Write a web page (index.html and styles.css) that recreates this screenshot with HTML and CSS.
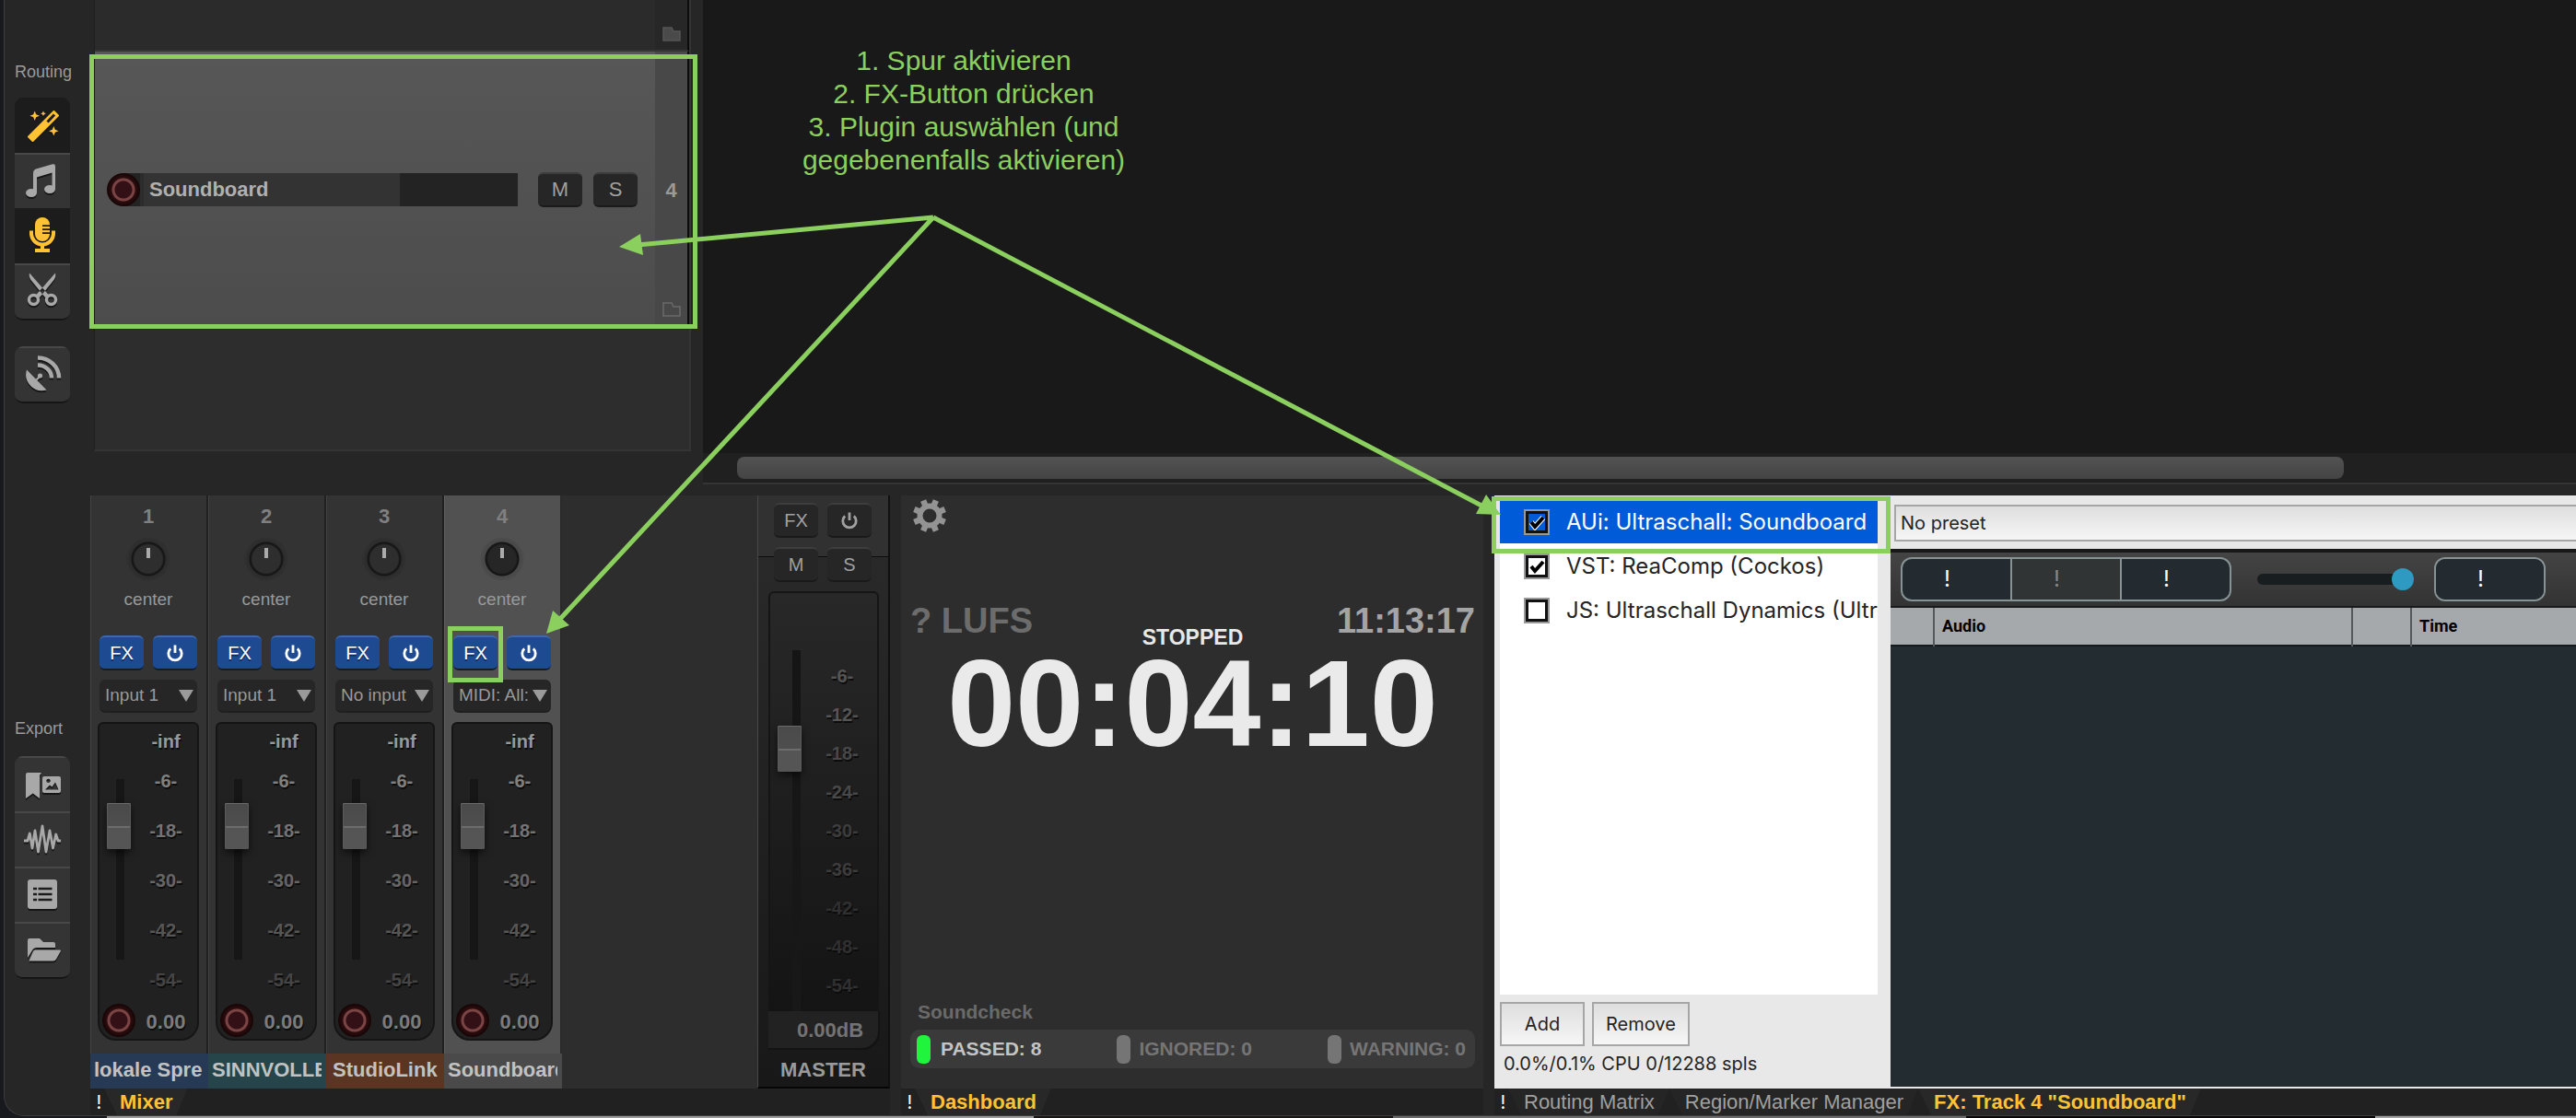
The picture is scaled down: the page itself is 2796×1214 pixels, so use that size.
FILE: index.html
```html
<!DOCTYPE html>
<html lang="de">
<head>
<meta charset="utf-8">
<title>Ultraschall</title>
<link rel="stylesheet" href="styles.css">
</head>
<body>
<svg class="defs" aria-hidden="true">
  <symbol id="power" viewBox="0 0 20 20"><path d="M5.2 5.4A7.2 7.2 0 1 0 14.8 5.4M10 1.5V10" fill="none" stroke="currentColor" stroke-width="2.8"/></symbol>
  <symbol id="folder" viewBox="0 0 20 16"><path d="M1 1H10L12 5H19V15H1Z" stroke-width="1.5"/></symbol>
</svg>
<div class="window">
  <nav class="sidebar">
    <h2 class="side-title">Routing</h2>
    <div class="tool-group">
      <button class="tool on" aria-label="Magic routing"><svg viewBox="0 0 60 60"><path fill-rule="evenodd" stroke="currentColor" stroke-width="2" stroke-linejoin="round" d="M42.5 15L47 19.5L19.5 47L15 42.5Z"/><path d="M35.5 26.5L43 18.5" stroke="#1c1c1c" stroke-width="3"/><path d="M21.700 14.500l1.500 3.700 3.700 1.500-3.700 1.500-1.500 3.700-1.500-3.700-3.700-1.500 3.700-1.500zM31 14.500l.9 1.900 1.900.9-1.900.9-.9 1.900-.9-1.900-1.900-.9 1.900-.9zM42.300 31l1.500 3.700 3.700 1.500-3.700 1.500-1.500 3.700-1.500-3.700-3.700-1.500 3.700-1.500z"/></svg></button>
      <button class="tool" aria-label="Music"><svg viewBox="0 0 60 60"><path d="M20 43V22Q20 18.500 23 17.500L41 12.300Q44 11.500 44 14.500V39H40.500V21.500L24 26.500V43Z"/><ellipse cx="18" cy="43.500" rx="6" ry="4.600"/><ellipse cx="38" cy="39.500" rx="6" ry="4.600"/></svg></button>
      <button class="tool on" aria-label="Recording"><svg viewBox="0 0 60 60"><rect x="22" y="10" width="16" height="26" rx="8"/><path d="M30 19.200h8M30 23.200h8M30 27.200h8" stroke="#1c1c1c" stroke-width="1.800"/><path d="M18 24.500V27.500a12 12 0 0 0 24 0V24.500" fill="none" stroke="currentColor" stroke-width="4"/><path d="M28 38h4v6h6v4H22v-4h6z"/></svg></button>
      <button class="tool" aria-label="Editing"><svg viewBox="0 0 60 60"><path d="M16 10.500L37 34.500L33 37L17.500 18Q15 14 16 10.500ZM44 10.500L23 34.500L27 37L42.500 18Q45 14 44 10.500Z"/><circle cx="20.500" cy="39.500" r="5" fill="none" stroke="currentColor" stroke-width="3.400"/><circle cx="39.500" cy="39.500" r="5" fill="none" stroke="currentColor" stroke-width="3.400"/></svg></button>
    </div>
    <div class="tool-group single">
      <button class="tool" aria-label="Streaming"><svg viewBox="0 0 60 60"><path d="M13 25.500L34.500 47.500A17.500 17.500 0 0 1 13 25.500Z"/><circle cx="27.500" cy="32" r="2.600"/><path d="M23 37L28 32" stroke="currentColor" stroke-width="2"/><path d="M25 12.500A23 22 0 0 1 48 34.500M25 20.500A15 14 0 0 1 40 34.500" fill="none" stroke="currentColor" stroke-width="4.500"/></svg></button>
    </div>
    <h2 class="side-title export">Export</h2>
    <div class="tool-group">
      <button class="tool" aria-label="Chapter images"><svg viewBox="0 0 60 60"><path d="M12 20Q12 18 14 18H29L27 21V46L19.700 40.500L12 46Z"/><path fill-rule="evenodd" d="M32 22H48Q50 22 50 24V38Q50 40 48 40H32Q30 40 30 38V24Q30 22 32 22ZM36.500 24.700A2.200 2.200 0 1 0 36.501 24.700ZM33 36.500H47.500L44 28.500L40.500 33.500L38 31.500Z"/></svg></button>
      <button class="tool" aria-label="Audio"><svg viewBox="0 0 60 60"><path d="M10 32H14L16.300 24L19 40L22 21L25.500 44L30 16L34 44L38 21L41.500 40L44.700 25L47 32H50" fill="none" stroke="currentColor" stroke-width="2.800" stroke-linejoin="round"/></svg></button>
      <button class="tool" aria-label="Metadata"><svg viewBox="0 0 60 60"><rect x="14" y="14" width="32" height="32" rx="3"/><path d="M20 24h4M20 30h4M20 36h4M25.500 24h15M25.500 30h15M25.500 36h15" stroke="#1c1c1c" stroke-width="2.600"/></svg></button>
      <button class="tool" aria-label="Project folder"><svg viewBox="0 0 60 60"><path d="M14 20Q14 18 16 18H27L31 22H42Q44 22 44 24V28H24Q20.500 28 19 31L14 39Z"/><path d="M22 30.500H49Q50.500 30.500 49.800 32L45 40.500Q44 42.500 41.500 42.500H15.500L20 32Q20.700 30.500 22 30.500Z"/></svg></button>
    </div>
  </nav>

  <main class="content">
    <section class="top">
      <div class="tracks">
        <div class="track prev"><div class="track-body"></div><div class="track-num"><svg class="folder filled"><use href="#folder"/></svg></div></div>
        <div class="track selected">
          <div class="track-body">
            <div class="name-bar"><button class="rec" aria-label="Record arm"></button><input class="track-name" value="Soundboard" aria-label="Track name"><span class="meter"></span></div>
            <button class="btn">M</button><button class="btn">S</button>
          </div>
          <div class="track-num"><span>4</span><svg class="folder"><use href="#folder"/></svg></div>
          <span class="mark mark-track"></span>
        </div>
      </div>
      <div class="arrange">
        <div class="canvas"><div class="note"><p>1. Spur aktivieren</p><p>2. FX-Button drücken</p><p>3. Plugin auswählen (und gegebenenfalls aktivieren)</p></div></div>
        <div class="scroll"><div class="scroll-thumb"></div></div>
      </div>
    </section>

    <section class="docks">
      <div class="dock">
        <div class="mixer">
          <article class="strip">
            <span class="num">1</span><span class="knob"></span><span class="pan">center</span>
            <div class="pair"><button class="btn blue">FX</button><button class="btn blue" aria-label="Bypass"><svg><use href="#power"/></svg></button></div>
            <select class="input-sel" aria-label="Input"><option>Input 1</option></select>
            <div class="fader"><div class="fader-l"><input type="range" value="82" aria-label="Volume"><button class="rec" aria-label="Record arm"></button></div>
              <ul class="scale"><li>-inf</li><li>-6-</li><li>-18-</li><li>-30-</li><li>-42-</li><li>-54-</li><li>0.00</li></ul></div>
            <span class="name c1">lokale Spre</span>
          </article>
          <article class="strip">
            <span class="num">2</span><span class="knob"></span><span class="pan">center</span>
            <div class="pair"><button class="btn blue">FX</button><button class="btn blue" aria-label="Bypass"><svg><use href="#power"/></svg></button></div>
            <select class="input-sel" aria-label="Input"><option>Input 1</option></select>
            <div class="fader"><div class="fader-l"><input type="range" value="82" aria-label="Volume"><button class="rec" aria-label="Record arm"></button></div>
              <ul class="scale"><li>-inf</li><li>-6-</li><li>-18-</li><li>-30-</li><li>-42-</li><li>-54-</li><li>0.00</li></ul></div>
            <span class="name c2">SINNVOLLE</span>
          </article>
          <article class="strip">
            <span class="num">3</span><span class="knob"></span><span class="pan">center</span>
            <div class="pair"><button class="btn blue">FX</button><button class="btn blue" aria-label="Bypass"><svg><use href="#power"/></svg></button></div>
            <select class="input-sel" aria-label="Input"><option>No input</option></select>
            <div class="fader"><div class="fader-l"><input type="range" value="82" aria-label="Volume"><button class="rec" aria-label="Record arm"></button></div>
              <ul class="scale"><li>-inf</li><li>-6-</li><li>-18-</li><li>-30-</li><li>-42-</li><li>-54-</li><li>0.00</li></ul></div>
            <span class="name c3">StudioLink</span>
          </article>
          <article class="strip active">
            <span class="num">4</span><span class="knob"></span><span class="pan">center</span>
            <div class="pair"><button class="btn blue">FX</button><button class="btn blue" aria-label="Bypass"><svg><use href="#power"/></svg></button><span class="mark mark-fx"></span></div>
            <select class="input-sel" aria-label="Input"><option>MIDI: All:</option></select>
            <div class="fader"><div class="fader-l"><input type="range" value="82" aria-label="Volume"><button class="rec" aria-label="Record arm"></button></div>
              <ul class="scale"><li>-inf</li><li>-6-</li><li>-18-</li><li>-30-</li><li>-42-</li><li>-54-</li><li>0.00</li></ul></div>
            <span class="name c4">Soundboard</span>
          </article>
          <article class="master">
            <div class="master-top"><div class="pair"><button class="btn">FX</button><button class="btn" aria-label="Bypass"><svg><use href="#power"/></svg></button></div></div>
            <div class="pair second"><button class="btn">M</button><button class="btn">S</button></div>
            <div class="fader"><div class="fader-l"><input type="range" value="76" aria-label="Master volume"></div>
              <ul class="scale"><li>-6-</li><li>-12-</li><li>-18-</li><li>-24-</li><li>-30-</li><li>-36-</li><li>-42-</li><li>-48-</li><li>-54-</li></ul></div>
            <span class="db">0.00dB</span>
            <span class="master-name">MASTER</span>
          </article>
        </div>
        <div class="tabs"><button class="bang">!</button><button class="tab current">Mixer</button></div>
      </div>

      <div class="dock">
        <div class="dashboard">
          <button class="gear" aria-label="Settings"><svg viewBox="-18 -18 36 36"><circle r="10.500" fill="none" stroke="currentColor" stroke-width="6"/><g stroke="currentColor" stroke-width="6.500"><path d="M4.600-11L6.900-16.600M11-4.600L16.600-6.900M11 4.600L16.600 6.900M4.600 11L6.900 16.600M-4.600 11L-6.900 16.600M-11 4.600L-16.600 6.900M-11-4.600L-16.600-6.900M-4.600-11L-6.900-16.600"/></g></svg></button>
          <div class="clock-row"><span class="lufs">? LUFS</span><span class="time">11:13:17</span></div>
          <span class="state">STOPPED</span>
          <span class="pos">00:04:10</span>
          <h3 class="check-title">Soundcheck</h3>
          <div class="checks"><span class="check ok"><i></i>PASSED: 8</span><span class="check"><i></i>IGNORED: 0</span><span class="check"><i></i>WARNING: 0</span></div>
        </div>
        <div class="tabs"><button class="bang">!</button><button class="tab current">Dashboard</button></div>
      </div>

      <div class="dock">
        <div class="fx">
          <div class="fx-left">
            <div class="fx-list">
              <label class="fx-item sel"><input type="checkbox" checked><span>AUi: Ultraschall: Soundboard</span></label>
              <label class="fx-item"><input type="checkbox" checked><span>VST: ReaComp (Cockos)</span></label>
              <label class="fx-item"><input type="checkbox"><span>JS: Ultraschall Dynamics (Ultr</span></label>
            </div>
            <div class="fx-actions"><button>Add</button><button>Remove</button></div>
            <p class="cpu">0.0%/0.1% CPU 0/12288 spls</p>
            <span class="mark mark-fxitem"></span>
          </div>
          <div class="fx-right">
            <div class="preset"><select aria-label="Preset"><option>No preset</option></select></div>
            <div class="player">
              <div class="seg"><button>!</button><button disabled>!</button><button>!</button></div>
              <input class="vol" type="range" value="100" aria-label="Player volume">
              <div class="seg"><button>!</button></div>
            </div>
            <table class="sounds"><thead><tr><th class="w1"></th><th class="w2">Audio</th><th class="w3"></th><th>Time</th></tr></thead></table>
            <div class="sounds-body"></div>
          </div>
        </div>
        <div class="tabs"><button class="bang">!</button><button class="tab">Routing Matrix</button><button class="tab">Region/Marker Manager</button><button class="tab current">FX: Track 4 "Soundboard"</button></div>
      </div>
    </section>
  </main>
</div>
<div class="behind"><i class="b1"></i><i class="b2"></i><i class="b3"></i><i class="b4"></i></div>
<svg class="arrows" aria-hidden="true">
  <g stroke="#8bcf5f" stroke-width="5" fill="none"><path d="M1013 236L692 266M1013 236L608 672M1013 236L1608 549"/></g>
  <g fill="#8bcf5f"><path d="M672 268L695 254L698 277Z"/><path d="M593 688L600 663L618 679Z"/><path d="M1629 559L1613 537L1602 558Z"/></g>
</svg>
</body>
</html>
```
FILE: styles.css
```css
* { box-sizing: border-box; }
body {
  margin: 0;
  min-height: 100vh;
  display: flex;
  flex-direction: column;
  position: relative;
  overflow-x: hidden;
  background: #17191f;
  color: #a6a6a6;
  font: 20px/24px "Liberation Sans", Arial, sans-serif;
}
button, input, select { font: inherit; color: inherit; margin: 0; padding: 0; border: 0; }
h2, h3, p, ul { margin: 0; padding: 0; list-style: none; }
.defs { position: absolute; width: 0; height: 0; }

.window {
  flex: 1;
  display: flex;
  margin-left: 4px;
  border-left: 1px solid #3c3c3c;
  border-bottom: 1px solid #3c3c3c;
  border-radius: 0 0 0 22px;
  background: #262626;
}

/* sidebar */
.sidebar { width: 93px; flex: none; padding: 66px 0 0 11px; }
.side-title { font-size: 18px; font-weight: 400; margin-bottom: 16px; color: #9a9a9a; }
.side-title.export { margin-top: 341px; margin-bottom: 18px; }
.tool-group { width: 60px; border-radius: 9px; overflow: hidden; border-bottom: 2px solid #151515; }
.tool-group.single { margin-top: 28px; }
.tool {
  display: block;
  width: 60px;
  height: 60px;
  background: #343434;
  border-top: 2px solid #484848;
  color: #a8a8a8;
}
.tool.on { background: #1c1c1c; border-top-color: #1c1c1c; color: #ffc233; }
.tool svg { display: block; width: 60px; height: 60px; margin-top: -2px; fill: currentColor; filter: drop-shadow(0 2px 0 #161616); }

.content { flex: 1; min-width: 0; display: flex; flex-direction: column; }

/* track list and arrange view */
.top { display: flex; gap: 13px; margin-bottom: 12px; }
.tracks {
  width: 648px;
  margin: 0 0 36px 4px;
  padding-bottom: 132px;
  flex: none;
  background: #2d2d2d;
  border: 2px solid #343434;
  border-top: 0;
  border-left: 1px solid #1e1e1e;
}
.track { display: flex; position: relative; border-right: 2px solid #0c0c0c; }
.track.prev { height: 56px; border-bottom: 2px solid #353535; }
.track.selected { height: 300px; }
.track-body { flex: 1; display: flex; align-items: center; }
.prev .track-body { background: #2b2b2b; }
.selected .track-body { padding: 0 19px 0 13px; background: linear-gradient(#575757, #4c4c4c); gap: 12px; }
.track-num {
  width: 35px;
  display: flex;
  flex-direction: column;
  align-items: center;
  justify-content: flex-end;
  padding-bottom: 9px;
  background: #272727;
  font-size: 22px;
  font-weight: 700;
  color: #9a9a9a;
}
.selected .track-num { background: #484848; padding-bottom: 12px; }
.track-num span { margin: auto 0 109px; }
.folder { width: 20px; height: 16px; fill: none; stroke: #6a6a6a; }
.folder.filled { fill: #4a4a4a; stroke: #555; }
.name-bar { flex: 1; height: 36px; display: flex; margin-right: 10px; background: linear-gradient(90deg, transparent 18px, #232323 18px); }
.rec {
  width: 36px;
  height: 36px;
  flex: none;
  border-radius: 50%;
  background: radial-gradient(circle, #321015 9px, #7b4444 10px, #7b4444 12px, #2c0d0f 13px, #150505 18px);
}
.track-name { width: 282px; padding-left: 6px; border-left: 4px solid #2c2c2c; background: #333; font-size: 22px; font-weight: 700; color: #b0b0b0; }
.meter { flex: 1; background: #232323; }
.btn {
  width: 48px;
  height: 38px;
  flex: none;
  border-radius: 6px;
  border-top: 2px solid #3d3d3d;
  border-bottom: 2px solid #1a1a1a;
  background: #262626;
  color: #a0a0a0;
  display: grid;
  place-items: center;
}
.selected .btn { font-size: 22px; }
.btn svg { width: 20px; height: 20px; display: block; }
.btn.blue { background: #1e4a92; border-top-color: #3d68ab; border-bottom-color: #141c2a; color: #fff; text-shadow: 0 2px 0 #122c58; }

.arrange { flex: 1; display: flex; flex-direction: column; }
.canvas { flex: 1; background: #191919; padding: 48px 0 0 93px; }
.note { width: 380px; text-align: center; font-size: 30px; line-height: 36px; color: #8bcf5f; }
.scroll { height: 34px; padding: 4px 252px 0 37px; background: #202020; border-bottom: 2px solid #343434; }
.scroll-thumb { height: 24px; border-radius: 8px; background: linear-gradient(#525252, #444); }

/* green markers */
.mark { position: absolute; border: 5px solid #8bcf5f; z-index: 2; }
.mark-track { inset: 3px -11px -1px -6px; }
.mark-fx { left: -6px; top: -10px; width: 60px; height: 61px; }
.mark-fxitem { left: -3px; right: 0; top: 1px; height: 62px; }

/* docks */
.docks { flex: 1; display: grid; grid-template-columns: 868px 632px 1fr; gap: 12px; }
.dock { display: flex; flex-direction: column; min-width: 0; }
.mixer { flex: 1; display: flex; background: #2d2d2d; }
.strip {
  width: 128px;
  padding: 11px 10px 0 9px;
  display: flex;
  flex-direction: column;
  align-items: center;
  background: #333;
  border-left: 1px solid #444;
  border-right: 2px solid #202020;
}
.strip.active { background: #515151; border-left-color: #606060; border-right-color: #2a2a2a; }
.num { font-size: 22px; font-weight: 700; color: #808080; }
.knob {
  width: 48px;
  height: 48px;
  margin: 10px 0 8px;
  border-radius: 50%;
  background:
    linear-gradient(#aaa, #aaa) 22px 12px / 4px 11px no-repeat,
    radial-gradient(circle, #2e2e2e 15px, #161616 17px, #161616 18px, #2c2c2c 19px, #303030 23px, transparent 24px);
}
.active .knob { background:
    linear-gradient(#aaa, #aaa) 22px 12px / 4px 11px no-repeat,
    radial-gradient(circle, #262626 15px, #161616 17px, #161616 18px, #484848 19px, #4c4c4c 23px, transparent 24px); }
.pan { font-size: 19px; color: #999; }
.pair { display: flex; gap: 10px; position: relative; }
.strip .pair { margin: 27px 0 10px; }
.input-sel {
  appearance: none;
  width: 106px;
  height: 36px;
  padding-left: 6px;
  border-radius: 6px;
  border-bottom: 2px solid #1f1f1f;
  background: #262626 url("data:image/svg+xml,%3Csvg xmlns='http://www.w3.org/2000/svg' width='16' height='13'%3E%3Cpath d='M0 0H16L8 13Z' fill='%239a9a9a'/%3E%3C/svg%3E") right 4px top 11px no-repeat;
  font-size: 19px;
  color: #999;
}
.fader {
  display: flex;
  width: 110px;
  height: 346px;
  margin: 10px -2px 0;
  border: 2px solid #151515;
  border-radius: 6px 6px 20px 20px;
  background: #212121;
}
.fader-l { width: 39px; padding: 60px 0 0 3px; display: flex; flex-direction: column; align-items: center; gap: 48px; }
.fader input {
  appearance: none;
  writing-mode: vertical-lr;
  direction: rtl;
  width: 26px;
  height: 196px;
  background: linear-gradient(#161616, #161616) 10px 0 / 9px 100% no-repeat;
}
.fader input::-webkit-slider-thumb {
  appearance: none;
  width: 26px;
  height: 50px;
  border-radius: 2px;
  background: linear-gradient(#4a4a4a, #4e4e4e 50%, #6c6c6c 50%, #6c6c6c 54%, #555 54%, #555);
  box-shadow: inset 0 1px 0 #6a6a6a, inset 1px 0 0 #5a5a5a, inset -1px 0 0 #5a5a5a, 0 4px 8px #0009;
}
.scale { width: 66px; padding-top: 7px; text-align: center; font-weight: 700; text-shadow: 1px 2px 0 #0c0c0c; color: #808080; }
.scale li { margin-bottom: 30px; }
.strip .scale li:nth-child(1) { margin-bottom: 19px; color: #999; }
.strip .scale li:nth-child(3) { color: #747474; }
.strip .scale li:nth-child(4) { color: #666; }
.strip .scale li:nth-child(5) { color: #565656; }
.strip .scale li:nth-child(6) { margin-bottom: 22px; color: #454545; }
.strip .scale li:nth-child(7) { margin: 0; font-size: 22px; color: #7c7c7c; }
.name {
  align-self: stretch;
  height: 38px;
  margin: auto -12px 0 -10px;
  padding-left: 4px;
  line-height: 36px;
  font-size: 22px;
  font-weight: 700;
  color: #c2c2c2;
  overflow: hidden;
  white-space: nowrap;
  border-right: 5px solid transparent;
  background-clip: border-box;
}
.c1 { background: #263a56; }
.c2 { background: #26454b; }
.c3 { background: #593522; padding-left: 7px; }
.c4 { background: #4a4a4a; }

.master {
  width: 144px;
  margin-left: auto;
  display: flex;
  flex-direction: column;
  background: linear-gradient(#2b2b2b, #181818);
  border-left: 1px solid #474747;
  border-right: 2px solid #101010;
  border-bottom: 2px solid #050505;
}
.master-top { height: 67px; padding: 8px 0 0 17px; background: #313131; border-bottom: 1px solid #0c0c0c; }
.master .second { margin: -11px 0 0 17px; }
.master .fader {
  width: 120px;
  height: 456px;
  margin: 10px 0 0 11px;
  border-bottom: 0;
  border-radius: 6px 6px 0 0;
  background: linear-gradient(#282828, #141414);
}
.master .fader-l { width: 40px; padding: 62px 0 0 1px; }
.master .fader input { height: 392px; background-position: 16px 0; background-image: linear-gradient(#151515, #181818); }
.master .scale { width: 76px; padding-top: 78px; }
.master .scale li { margin-bottom: 18px; color: #555; }
.master .scale li:nth-child(n+3) { color: #484848; }
.master .scale li:nth-child(n+5) { color: #3c3c3c; }
.master .scale li:nth-child(n+7) { color: #303030; }
.db {
  width: 121px;
  height: 42px;
  margin-left: 11px;
  padding-left: 31px;
  line-height: 42px;
  font-size: 22px;
  font-weight: 700;
  color: #737373;
  background: #222;
  border-radius: 0 0 18px 0;
  box-shadow: inset -2px -2px 0 #131313;
}
.master-name { margin-top: 10px; text-align: center; font-size: 22px; font-weight: 700; color: #9a9a9a; }

/* tab bars */
.tabs { height: 29px; display: flex; background: #212121; }
.tabs button { background: none; height: 29px; font-size: 22px; line-height: 29px; white-space: nowrap; }
.tabs .bang { width: 15px; padding-left: 4px; color: #fff; font: 20px/24px Inter, sans-serif; }
.tabs .tab { padding: 0 16px 0 17px; color: #a0a0a0; background: #252525; clip-path: polygon(0 0, 100% 0, calc(100% - 12px) 100%, 14px 100%); }
.tabs .current { color: #ffc233; font-weight: 700; background: #282828; }

/* dashboard */
.dashboard { flex: 1; display: flex; flex-direction: column; background: #2d2d2d; font-weight: 700; padding: 4px 9px 22px 10px; }
.gear { width: 36px; height: 36px; margin-left: 3px; background: none; color: #939393; }
.gear svg { display: block; width: 36px; height: 36px; }
.clock-row { display: flex; justify-content: space-between; margin-top: 78px; font-size: 38px; line-height: 36px; color: #6c6c6c; }
.time { color: #a4a4a4; }
.state { align-self: center; margin-top: -12px; font-size: 23px; color: #e8e8e8; }
.pos { align-self: center; margin-top: 4px; font-size: 133px; line-height: 112px; color: #eaeaea; }
.check-title { margin: auto 0 7px 8px; font-size: 21px; color: #6a6a6a; }
.checks { display: flex; justify-content: space-between; height: 42px; padding: 0 10px 0 7px; border-radius: 10px; background: #3a3a3a; font-size: 21px; color: #757575; }
.check { display: flex; align-items: center; gap: 9px; }
.check i { width: 15px; height: 31px; border-radius: 6px; background: #757575; }
.check.ok { color: #c4c4c4; gap: 11px; }
.check.ok i { background: #20f43c; }

/* effects window */
.fx { flex: 1; display: flex; background: #e8e8e8; color: #242424; font-family: Inter, "Noto Sans", sans-serif; }
.fx-left { position: relative; width: 430px; flex: none; padding: 6px 14px 0 6px; display: flex; flex-direction: column; }
.fx-list { height: 536px; background: #fff; overflow: hidden; }
.fx-item { display: flex; align-items: center; height: 46px; margin-bottom: 2px; padding-left: 26px; gap: 18px; font-size: 24px; white-space: nowrap; }
.fx-item.sel { background: #005bd8; color: #fff; }
.fx-item input {
  appearance: none;
  width: 28px;
  height: 28px;
  flex: none;
  border: 2px solid #999;
  outline: 3px solid #111;
  outline-offset: -5px;
}
.fx-item input:checked { background: url("data:image/svg+xml,%3Csvg xmlns='http://www.w3.org/2000/svg' width='24' height='24'%3E%3Cpath d='M6 12L10 17L19 7' fill='none' stroke='%23fff' stroke-width='6'/%3E%3Cpath d='M6 12L10 17L19 7' fill='none' stroke='%23000' stroke-width='4'/%3E%3C/svg%3E") center no-repeat; }
.fx-actions { display: flex; gap: 8px; margin: 8px 0 7px; }
.fx-actions button, .preset select { border: 2px solid #a6a6a6; background: linear-gradient(#dedede, #f6f6f6); }
.fx-actions button { height: 48px; padding: 0 13px; min-width: 92px; font-size: 20px; }
.cpu { margin-left: 4px; font-size: 20px; }
.fx-right { flex: 1; min-width: 0; display: flex; flex-direction: column; margin-bottom: 2px; background: #222c31; }
.preset { padding: 10px 0 8px 4px; background: #e8e8e8; border-bottom: 4px solid #181818; height: 62px; }
.preset select { appearance: none; display: block; width: 100%; height: 40px; padding-left: 5px; border-right: 0; font-size: 20px; }
.player { display: flex; align-items: center; height: 60px; padding-left: 11px; background: linear-gradient(#444, #333); border-bottom: 2px solid #1a1a1a; }
.seg { display: flex; border: 2px solid #869294; border-radius: 12px; overflow: hidden; background: #869294; gap: 2px; }
.seg button { width: 117px; height: 44px; padding-right: 20px; background: #232b31; color: #fff; font-size: 24px; }
.seg button:disabled { background: #303435; color: #868686; }
.vol { appearance: none; width: 170px; height: 24px; margin: 0 22px 0 28px; background: none; }
.vol::-webkit-slider-runnable-track { height: 12px; border-radius: 6px; background: #181d20; }
.vol::-webkit-slider-thumb { appearance: none; width: 24px; height: 24px; margin-top: -6px; border-radius: 50%; background: #2e9ac2; }
.sounds { width: 100%; height: 42px; border-collapse: collapse; table-layout: fixed; background: #a5a9ac; border-bottom: 2px solid #151a1d; font-size: 18px; color: #000; }
.sounds th { padding: 0 0 0 8px; text-align: left; border-left: 2px solid #54585a; font-family: Roboto, sans-serif; }
.sounds .w1 { width: 47px; border-left: 0; }
.sounds .w2 { width: 454px; }
.sounds .w3 { width: 64px; }
.sounds-body { flex: 1; }

/* strip of the desktop below the window */
.behind { display: flex; height: 2px; margin-left: 116px; }
.b1 { flex: 0 0 1006px; background: #9a9a9a; }
.b2 { flex: 0 0 390px; background: #1a1616; }
.b3 { flex: 0 0 622px; background: #6a6a6a; }
.b4 { flex: 1; background: linear-gradient(90deg, #0a0709 444px, #a0a0a0 444px); }

.arrows { position: absolute; left: 0; top: 0; width: 100%; height: 100%; pointer-events: none; z-index: 3; }
```
